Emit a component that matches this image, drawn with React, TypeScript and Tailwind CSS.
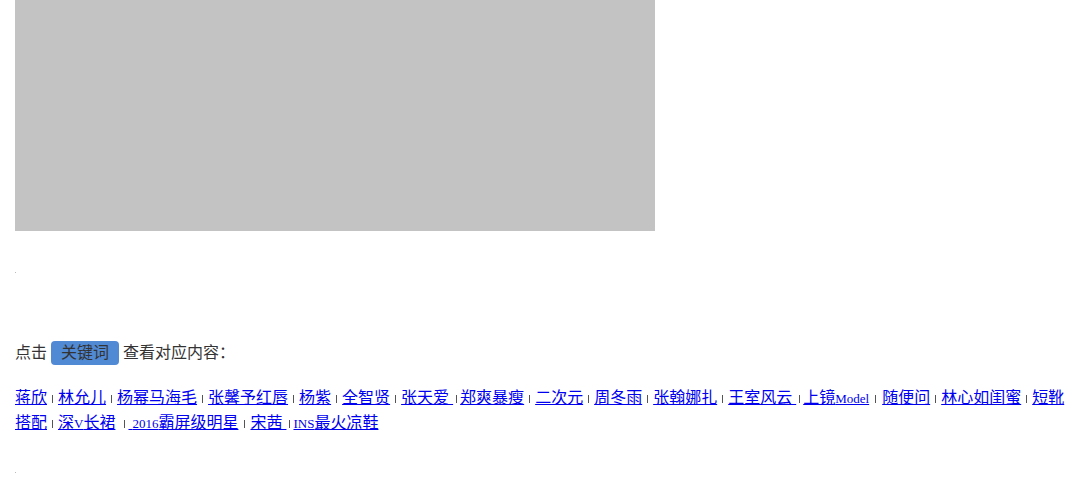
import React from "react";

type Part = string | { latin: string };
type Item = { parts: Part[]; sep: number; barRight?: boolean };

const items: Item[] = [
  { parts: ["蒋欣"], sep: 11 },
  { parts: ["林允儿"], sep: 11 },
  { parts: ["杨幂马海毛"], sep: 11 },
  { parts: ["张馨予红唇"], sep: 11 },
  { parts: ["杨紫"], sep: 11 },
  { parts: ["全智贤"], sep: 11 },
  { parts: ["张天爱 "], sep: 7 },
  { parts: ["郑爽暴瘦"], sep: 11 },
  { parts: ["二次元"], sep: 11 },
  { parts: ["周冬雨"], sep: 11 },
  { parts: ["张翰娜扎"], sep: 11 },
  { parts: ["王室风云 "], sep: 7 },
  { parts: ["上镜", { latin: "Model" }], sep: 13 },
  { parts: ["随便问"], sep: 11 },
  { parts: ["林心如闺蜜"], sep: 11 },
  { parts: ["短靴搭配"], sep: 11 },
  { parts: ["深", { latin: "V" }, "长裙"], sep: 13, barRight: true },
  { parts: [" ", { latin: "2016" }, "霸屏级明星"], sep: 12 },
  { parts: ["宋茜 "], sep: 7 },
  { parts: [{ latin: "INS" }, "最火凉鞋"], sep: 0 },
];

function Sep({ w, right }: { w: number; right?: boolean }) {
  return (
    <span
      className={
        right
          ? "inline-flex justify-end pr-[3px] align-baseline"
          : "inline-flex justify-center align-baseline"
      }
      style={{ width: w }}
    >
      <span className="inline-block w-[1px] h-[8px] bg-[#555555] mb-[1px]" />
    </span>
  );
}

export default function App() {
  return (
    <div
      className="w-[1080px] h-[500px] bg-white overflow-hidden px-[15px] text-[16px]"
      style={{ fontFamily: '"Liberation Serif", "Noto Sans CJK SC", serif' }}
    >
      <div className="w-[640px] h-[231px] bg-[#c3c3c3]" />
      <div className="h-[41px]" />
      <div className="w-[1px] h-[1px] bg-[#bbbbbb]" />
      <div className="h-[68px]" />
      <div className="flex items-center h-[24px] text-[#333333]">
        <span>点击</span>
        <span className="ml-[4px] mr-[4px] inline-flex items-center justify-center w-[68px] h-[24px] rounded-[4px] bg-[#5089d4] text-[#333333]">
          关键词
        </span>
        <span>查看对应内容：</span>
      </div>
      <div className="h-[20px]" />
      <p className="leading-[25px] w-[1050px]">
        {items.map((it, i) => (
          <React.Fragment key={i}>
            <a href="#" className="text-[#0000ee] underline leading-[25px]">
              {it.parts.map((p, j) =>
                typeof p === "string" ? (
                  <React.Fragment key={j}>{p}</React.Fragment>
                ) : (
                  <span key={j} className="text-[13px] leading-[13px]">
                    {p.latin}
                  </span>
                )
              )}
            </a>
            {i < items.length - 1 && <Sep w={it.sep} right={it.barRight} />}
          </React.Fragment>
        ))}
      </p>
      <div className="h-[37px]" />
      <div className="w-[1px] h-[1px] bg-[#bbbbbb]" />
    </div>
  );
}
